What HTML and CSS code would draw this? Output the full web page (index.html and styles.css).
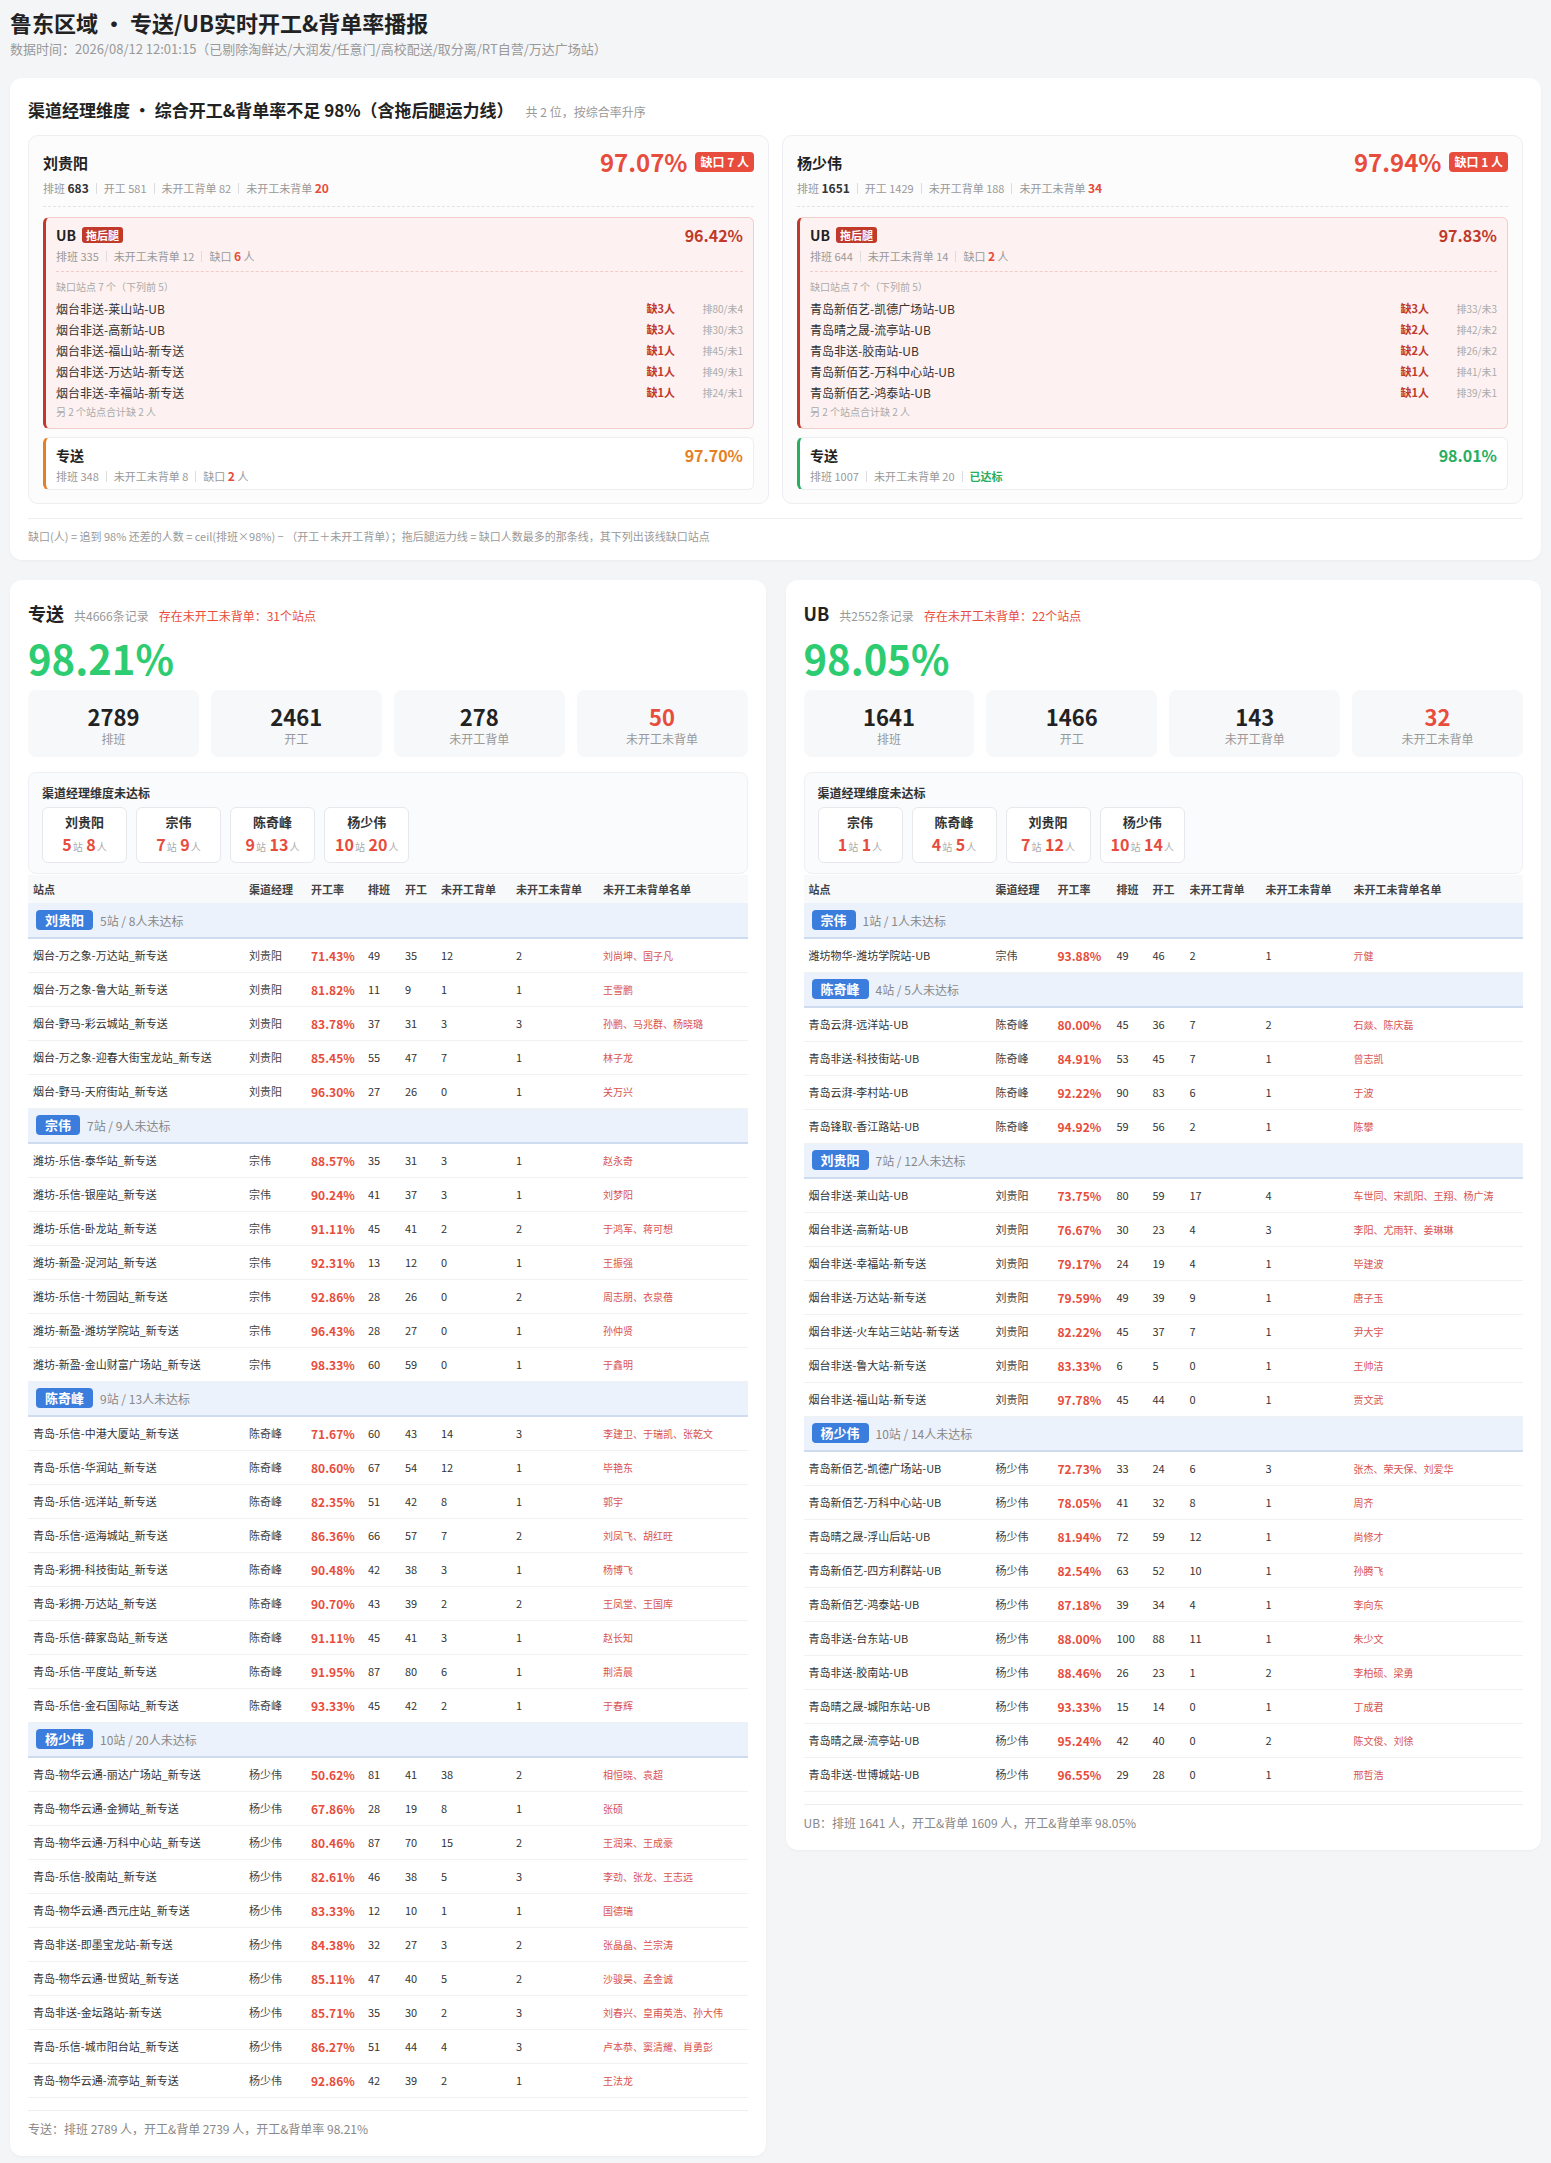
FILE: index.html
```html
<!DOCTYPE html>
<html lang="zh-CN">
<head>
<meta charset="utf-8">
<title>鲁东区域 · 专送/UB实时开工&amp;背单率播报</title>
<link rel="stylesheet" href="styles.css">
</head>
<body>
<h1 class="page-title">鲁东区域 · 专送/UB实时开工&amp;背单率播报</h1>
<div class="page-sub">数据时间：2026/08/12 12:01:15（已剔除淘鲜达/大润发/任意门/高校配送/取分离/RT自营/万达广场站）</div>

<section class="card top-card">
  <div class="sec-head">
    <span class="sec-title">渠道经理维度 · 综合开工&amp;背单率不足 98%（含拖后腿运力线）</span>
    <span class="sec-note">共 2 位，按综合率升序</span>
  </div>
  <div class="mgr-grid">
    <div class="mgr">
      <div class="mgr-head">
        <span class="mgr-name">刘贵阳</span>
        <span class="mgr-rate">97.07%</span>
        <span class="gap-badge">缺口 7 人</span>
      </div>
      <div class="mgr-stats">排班 <b class="b">683</b><i class="sep"></i>开工 581<i class="sep"></i>未开工背单 82<i class="sep"></i>未开工未背单 <b class="r">20</b></div>
      <div class="line ub">
        <div class="line-head"><span class="line-name">UB</span><span class="tag">拖后腿</span><span class="line-rate dred">96.42%</span></div>
        <div class="line-stats">排班 335<i class="sep"></i>未开工未背单 12<i class="sep"></i>缺口 <b class="r">6</b> 人</div>
        <div class="gap-title">缺口站点 7 个（下列前 5）</div>
        <div class="gap-list">
          <div class="gap-row"><span>烟台非送-莱山站-UB</span><span class="q">缺3人</span><span class="p">排80/未4</span></div>
          <div class="gap-row"><span>烟台非送-高新站-UB</span><span class="q">缺3人</span><span class="p">排30/未3</span></div>
          <div class="gap-row"><span>烟台非送-福山站-新专送</span><span class="q">缺1人</span><span class="p">排45/未1</span></div>
          <div class="gap-row"><span>烟台非送-万达站-新专送</span><span class="q">缺1人</span><span class="p">排49/未1</span></div>
          <div class="gap-row"><span>烟台非送-幸福站-新专送</span><span class="q">缺1人</span><span class="p">排24/未1</span></div>
        </div>
        <div class="gap-more">另 2 个站点合计缺 2 人</div>
      </div>
      <div class="line warn">
        <div class="line-head"><span class="line-name">专送</span><span class="line-rate orange">97.70%</span></div>
        <div class="line-stats">排班 348<i class="sep"></i>未开工未背单 8<i class="sep"></i>缺口 <b class="r">2</b> 人</div>
      </div>
    </div>

    <div class="mgr">
      <div class="mgr-head">
        <span class="mgr-name">杨少伟</span>
        <span class="mgr-rate">97.94%</span>
        <span class="gap-badge">缺口 1 人</span>
      </div>
      <div class="mgr-stats">排班 <b class="b">1651</b><i class="sep"></i>开工 1429<i class="sep"></i>未开工背单 188<i class="sep"></i>未开工未背单 <b class="r">34</b></div>
      <div class="line ub">
        <div class="line-head"><span class="line-name">UB</span><span class="tag">拖后腿</span><span class="line-rate dred">97.83%</span></div>
        <div class="line-stats">排班 644<i class="sep"></i>未开工未背单 14<i class="sep"></i>缺口 <b class="r">2</b> 人</div>
        <div class="gap-title">缺口站点 7 个（下列前 5）</div>
        <div class="gap-list">
          <div class="gap-row"><span>青岛新佰艺-凯德广场站-UB</span><span class="q">缺3人</span><span class="p">排33/未3</span></div>
          <div class="gap-row"><span>青岛晴之晟-流亭站-UB</span><span class="q">缺2人</span><span class="p">排42/未2</span></div>
          <div class="gap-row"><span>青岛非送-胶南站-UB</span><span class="q">缺2人</span><span class="p">排26/未2</span></div>
          <div class="gap-row"><span>青岛新佰艺-万科中心站-UB</span><span class="q">缺1人</span><span class="p">排41/未1</span></div>
          <div class="gap-row"><span>青岛新佰艺-鸿泰站-UB</span><span class="q">缺1人</span><span class="p">排39/未1</span></div>
        </div>
        <div class="gap-more">另 2 个站点合计缺 2 人</div>
      </div>
      <div class="line ok">
        <div class="line-head"><span class="line-name">专送</span><span class="line-rate dgreen">98.01%</span></div>
        <div class="line-stats">排班 1007<i class="sep"></i>未开工未背单 20<i class="sep"></i><b class="g">已达标</b></div>
      </div>
    </div>
  </div>
  <div class="foot">缺口(人) = 追到 98% 还差的人数 = ceil(排班×98%) − （开工＋未开工背单）；拖后腿运力线 = 缺口人数最多的那条线，其下列出该线缺口站点</div>
</section>

<div class="bottom-grid">
  <section class="card">
    <div class="panel-head"><span class="panel-title">专送</span><span class="cnt">共4666条记录</span><span class="warn-txt">存在未开工未背单：31个站点</span></div>
    <div class="big-rate">98.21%</div>
    <div class="stats">
      <div class="stat"><div class="n">2789</div><div class="l">排班</div></div>
      <div class="stat"><div class="n">2461</div><div class="l">开工</div></div>
      <div class="stat"><div class="n">278</div><div class="l">未开工背单</div></div>
      <div class="stat"><div class="n red">50</div><div class="l">未开工未背单</div></div>
    </div>
    <div class="mgr-panel">
      <div class="mp-title">渠道经理维度未达标</div>
      <div class="chips">
        <div class="chip"><div class="nm">刘贵阳</div><div class="nums"><b>5</b><small>站</small> <b>8</b><small>人</small></div></div>
        <div class="chip"><div class="nm">宗伟</div><div class="nums"><b>7</b><small>站</small> <b>9</b><small>人</small></div></div>
        <div class="chip"><div class="nm">陈奇峰</div><div class="nums"><b>9</b><small>站</small> <b>13</b><small>人</small></div></div>
        <div class="chip"><div class="nm">杨少伟</div><div class="nums"><b>10</b><small>站</small> <b>20</b><small>人</small></div></div>
      </div>
    </div>
    <table class="tbl zs">
      <colgroup><col class="c1"><col class="c2"><col class="c3"><col class="c4"><col class="c5"><col class="c6"><col class="c7"><col class="c8"></colgroup>
      <thead><tr><th>站点</th><th>渠道经理</th><th>开工率</th><th>排班</th><th>开工</th><th>未开工背单</th><th>未开工未背单</th><th>未开工未背单名单</th></tr></thead>
      <tbody>
        <tr class="grp"><td colspan="8"><span class="gbadge">刘贵阳</span><span class="gnote">5站 / 8人未达标</span></td></tr>
        <tr><td>烟台-万之象-万达站_新专送</td><td class="m">刘贵阳</td><td class="rate">71.43%</td><td>49</td><td>35</td><td>12</td><td>2</td><td class="names">刘尚坤、国子凡</td></tr>
        <tr><td>烟台-万之象-鲁大站_新专送</td><td class="m">刘贵阳</td><td class="rate">81.82%</td><td>11</td><td>9</td><td>1</td><td>1</td><td class="names">王雪鹏</td></tr>
        <tr><td>烟台-野马-彩云城站_新专送</td><td class="m">刘贵阳</td><td class="rate">83.78%</td><td>37</td><td>31</td><td>3</td><td>3</td><td class="names">孙鹏、马兆群、杨晓璐</td></tr>
        <tr><td>烟台-万之象-迎春大街宝龙站_新专送</td><td class="m">刘贵阳</td><td class="rate">85.45%</td><td>55</td><td>47</td><td>7</td><td>1</td><td class="names">林子龙</td></tr>
        <tr><td>烟台-野马-天府街站_新专送</td><td class="m">刘贵阳</td><td class="rate">96.30%</td><td>27</td><td>26</td><td>0</td><td>1</td><td class="names">关万兴</td></tr>
        <tr class="grp"><td colspan="8"><span class="gbadge">宗伟</span><span class="gnote">7站 / 9人未达标</span></td></tr>
        <tr><td>潍坊-乐信-泰华站_新专送</td><td class="m">宗伟</td><td class="rate">88.57%</td><td>35</td><td>31</td><td>3</td><td>1</td><td class="names">赵永奇</td></tr>
        <tr><td>潍坊-乐信-银座站_新专送</td><td class="m">宗伟</td><td class="rate">90.24%</td><td>41</td><td>37</td><td>3</td><td>1</td><td class="names">刘梦阳</td></tr>
        <tr><td>潍坊-乐信-卧龙站_新专送</td><td class="m">宗伟</td><td class="rate">91.11%</td><td>45</td><td>41</td><td>2</td><td>2</td><td class="names">于鸿军、蒋可想</td></tr>
        <tr><td>潍坊-新盈-浞河站_新专送</td><td class="m">宗伟</td><td class="rate">92.31%</td><td>13</td><td>12</td><td>0</td><td>1</td><td class="names">王振强</td></tr>
        <tr><td>潍坊-乐信-十笏园站_新专送</td><td class="m">宗伟</td><td class="rate">92.86%</td><td>28</td><td>26</td><td>0</td><td>2</td><td class="names">周志朋、衣泉蓓</td></tr>
        <tr><td>潍坊-新盈-潍坊学院站_新专送</td><td class="m">宗伟</td><td class="rate">96.43%</td><td>28</td><td>27</td><td>0</td><td>1</td><td class="names">孙仲贤</td></tr>
        <tr><td>潍坊-新盈-金山财富广场站_新专送</td><td class="m">宗伟</td><td class="rate">98.33%</td><td>60</td><td>59</td><td>0</td><td>1</td><td class="names">于鑫明</td></tr>
        <tr class="grp"><td colspan="8"><span class="gbadge">陈奇峰</span><span class="gnote">9站 / 13人未达标</span></td></tr>
        <tr><td>青岛-乐信-中港大厦站_新专送</td><td class="m">陈奇峰</td><td class="rate">71.67%</td><td>60</td><td>43</td><td>14</td><td>3</td><td class="names">李建卫、于瑞凯、张乾文</td></tr>
        <tr><td>青岛-乐信-华润站_新专送</td><td class="m">陈奇峰</td><td class="rate">80.60%</td><td>67</td><td>54</td><td>12</td><td>1</td><td class="names">毕艳东</td></tr>
        <tr><td>青岛-乐信-远洋站_新专送</td><td class="m">陈奇峰</td><td class="rate">82.35%</td><td>51</td><td>42</td><td>8</td><td>1</td><td class="names">郭宇</td></tr>
        <tr><td>青岛-乐信-运海城站_新专送</td><td class="m">陈奇峰</td><td class="rate">86.36%</td><td>66</td><td>57</td><td>7</td><td>2</td><td class="names">刘凤飞、胡红旺</td></tr>
        <tr><td>青岛-彩拥-科技街站_新专送</td><td class="m">陈奇峰</td><td class="rate">90.48%</td><td>42</td><td>38</td><td>3</td><td>1</td><td class="names">杨博飞</td></tr>
        <tr><td>青岛-彩拥-万达站_新专送</td><td class="m">陈奇峰</td><td class="rate">90.70%</td><td>43</td><td>39</td><td>2</td><td>2</td><td class="names">王凤堂、王国库</td></tr>
        <tr><td>青岛-乐信-薛家岛站_新专送</td><td class="m">陈奇峰</td><td class="rate">91.11%</td><td>45</td><td>41</td><td>3</td><td>1</td><td class="names">赵长知</td></tr>
        <tr><td>青岛-乐信-平度站_新专送</td><td class="m">陈奇峰</td><td class="rate">91.95%</td><td>87</td><td>80</td><td>6</td><td>1</td><td class="names">荆清晨</td></tr>
        <tr><td>青岛-乐信-金石国际站_新专送</td><td class="m">陈奇峰</td><td class="rate">93.33%</td><td>45</td><td>42</td><td>2</td><td>1</td><td class="names">于春辉</td></tr>
        <tr class="grp"><td colspan="8"><span class="gbadge">杨少伟</span><span class="gnote">10站 / 20人未达标</span></td></tr>
        <tr><td>青岛-物华云通-丽达广场站_新专送</td><td class="m">杨少伟</td><td class="rate">50.62%</td><td>81</td><td>41</td><td>38</td><td>2</td><td class="names">相恒晓、袁超</td></tr>
        <tr><td>青岛-物华云通-金狮站_新专送</td><td class="m">杨少伟</td><td class="rate">67.86%</td><td>28</td><td>19</td><td>8</td><td>1</td><td class="names">张硕</td></tr>
        <tr><td>青岛-物华云通-万科中心站_新专送</td><td class="m">杨少伟</td><td class="rate">80.46%</td><td>87</td><td>70</td><td>15</td><td>2</td><td class="names">王润来、王成豪</td></tr>
        <tr><td>青岛-乐信-胶南站_新专送</td><td class="m">杨少伟</td><td class="rate">82.61%</td><td>46</td><td>38</td><td>5</td><td>3</td><td class="names">李劲、张龙、王志远</td></tr>
        <tr><td>青岛-物华云通-西元庄站_新专送</td><td class="m">杨少伟</td><td class="rate">83.33%</td><td>12</td><td>10</td><td>1</td><td>1</td><td class="names">国德瑞</td></tr>
        <tr><td>青岛非送-即墨宝龙站-新专送</td><td class="m">杨少伟</td><td class="rate">84.38%</td><td>32</td><td>27</td><td>3</td><td>2</td><td class="names">张晶晶、兰宗涛</td></tr>
        <tr><td>青岛-物华云通-世贸站_新专送</td><td class="m">杨少伟</td><td class="rate">85.11%</td><td>47</td><td>40</td><td>5</td><td>2</td><td class="names">沙骏昊、孟金诚</td></tr>
        <tr><td>青岛非送-金坛路站-新专送</td><td class="m">杨少伟</td><td class="rate">85.71%</td><td>35</td><td>30</td><td>2</td><td>3</td><td class="names">刘春兴、皇甫英浩、孙大伟</td></tr>
        <tr><td>青岛-乐信-城市阳台站_新专送</td><td class="m">杨少伟</td><td class="rate">86.27%</td><td>51</td><td>44</td><td>4</td><td>3</td><td class="names">卢本恭、窦清耀、肖勇彭</td></tr>
        <tr><td>青岛-物华云通-流亭站_新专送</td><td class="m">杨少伟</td><td class="rate">92.86%</td><td>42</td><td>39</td><td>2</td><td>1</td><td class="names">王法龙</td></tr>
      </tbody>
    </table>
    <div class="panel-foot">专送：排班 2789 人，开工&amp;背单 2739 人，开工&amp;背单率 98.21%</div>
  </section>

  <section class="card">
    <div class="panel-head"><span class="panel-title">UB</span><span class="cnt">共2552条记录</span><span class="warn-txt">存在未开工未背单：22个站点</span></div>
    <div class="big-rate">98.05%</div>
    <div class="stats">
      <div class="stat"><div class="n">1641</div><div class="l">排班</div></div>
      <div class="stat"><div class="n">1466</div><div class="l">开工</div></div>
      <div class="stat"><div class="n">143</div><div class="l">未开工背单</div></div>
      <div class="stat"><div class="n red">32</div><div class="l">未开工未背单</div></div>
    </div>
    <div class="mgr-panel">
      <div class="mp-title">渠道经理维度未达标</div>
      <div class="chips">
        <div class="chip"><div class="nm">宗伟</div><div class="nums"><b>1</b><small>站</small> <b>1</b><small>人</small></div></div>
        <div class="chip"><div class="nm">陈奇峰</div><div class="nums"><b>4</b><small>站</small> <b>5</b><small>人</small></div></div>
        <div class="chip"><div class="nm">刘贵阳</div><div class="nums"><b>7</b><small>站</small> <b>12</b><small>人</small></div></div>
        <div class="chip"><div class="nm">杨少伟</div><div class="nums"><b>10</b><small>站</small> <b>14</b><small>人</small></div></div>
      </div>
    </div>
    <table class="tbl ub-t">
      <colgroup><col class="c1"><col class="c2"><col class="c3"><col class="c4"><col class="c5"><col class="c6"><col class="c7"><col class="c8"></colgroup>
      <thead><tr><th>站点</th><th>渠道经理</th><th>开工率</th><th>排班</th><th>开工</th><th>未开工背单</th><th>未开工未背单</th><th>未开工未背单名单</th></tr></thead>
      <tbody>
        <tr class="grp"><td colspan="8"><span class="gbadge">宗伟</span><span class="gnote">1站 / 1人未达标</span></td></tr>
        <tr><td>潍坊物华-潍坊学院站-UB</td><td class="m">宗伟</td><td class="rate">93.88%</td><td>49</td><td>46</td><td>2</td><td>1</td><td class="names">亓健</td></tr>
        <tr class="grp"><td colspan="8"><span class="gbadge">陈奇峰</span><span class="gnote">4站 / 5人未达标</span></td></tr>
        <tr><td>青岛云湃-远洋站-UB</td><td class="m">陈奇峰</td><td class="rate">80.00%</td><td>45</td><td>36</td><td>7</td><td>2</td><td class="names">石燚、陈庆磊</td></tr>
        <tr><td>青岛非送-科技街站-UB</td><td class="m">陈奇峰</td><td class="rate">84.91%</td><td>53</td><td>45</td><td>7</td><td>1</td><td class="names">曾志凯</td></tr>
        <tr><td>青岛云湃-李村站-UB</td><td class="m">陈奇峰</td><td class="rate">92.22%</td><td>90</td><td>83</td><td>6</td><td>1</td><td class="names">于波</td></tr>
        <tr><td>青岛锋取-香江路站-UB</td><td class="m">陈奇峰</td><td class="rate">94.92%</td><td>59</td><td>56</td><td>2</td><td>1</td><td class="names">陈攀</td></tr>
        <tr class="grp"><td colspan="8"><span class="gbadge">刘贵阳</span><span class="gnote">7站 / 12人未达标</span></td></tr>
        <tr><td>烟台非送-莱山站-UB</td><td class="m">刘贵阳</td><td class="rate">73.75%</td><td>80</td><td>59</td><td>17</td><td>4</td><td class="names">车世同、宋凯阳、王翔、杨广涛</td></tr>
        <tr><td>烟台非送-高新站-UB</td><td class="m">刘贵阳</td><td class="rate">76.67%</td><td>30</td><td>23</td><td>4</td><td>3</td><td class="names">李阳、尤雨轩、姜琳琳</td></tr>
        <tr><td>烟台非送-幸福站-新专送</td><td class="m">刘贵阳</td><td class="rate">79.17%</td><td>24</td><td>19</td><td>4</td><td>1</td><td class="names">毕建波</td></tr>
        <tr><td>烟台非送-万达站-新专送</td><td class="m">刘贵阳</td><td class="rate">79.59%</td><td>49</td><td>39</td><td>9</td><td>1</td><td class="names">唐子玉</td></tr>
        <tr><td>烟台非送-火车站三站站-新专送</td><td class="m">刘贵阳</td><td class="rate">82.22%</td><td>45</td><td>37</td><td>7</td><td>1</td><td class="names">尹大宇</td></tr>
        <tr><td>烟台非送-鲁大站-新专送</td><td class="m">刘贵阳</td><td class="rate">83.33%</td><td>6</td><td>5</td><td>0</td><td>1</td><td class="names">王帅洁</td></tr>
        <tr><td>烟台非送-福山站-新专送</td><td class="m">刘贵阳</td><td class="rate">97.78%</td><td>45</td><td>44</td><td>0</td><td>1</td><td class="names">贾文武</td></tr>
        <tr class="grp"><td colspan="8"><span class="gbadge">杨少伟</span><span class="gnote">10站 / 14人未达标</span></td></tr>
        <tr><td>青岛新佰艺-凯德广场站-UB</td><td class="m">杨少伟</td><td class="rate">72.73%</td><td>33</td><td>24</td><td>6</td><td>3</td><td class="names">张杰、荣天保、刘爱华</td></tr>
        <tr><td>青岛新佰艺-万科中心站-UB</td><td class="m">杨少伟</td><td class="rate">78.05%</td><td>41</td><td>32</td><td>8</td><td>1</td><td class="names">周齐</td></tr>
        <tr><td>青岛晴之晟-浮山后站-UB</td><td class="m">杨少伟</td><td class="rate">81.94%</td><td>72</td><td>59</td><td>12</td><td>1</td><td class="names">尚修才</td></tr>
        <tr><td>青岛新佰艺-四方利群站-UB</td><td class="m">杨少伟</td><td class="rate">82.54%</td><td>63</td><td>52</td><td>10</td><td>1</td><td class="names">孙腾飞</td></tr>
        <tr><td>青岛新佰艺-鸿泰站-UB</td><td class="m">杨少伟</td><td class="rate">87.18%</td><td>39</td><td>34</td><td>4</td><td>1</td><td class="names">李向东</td></tr>
        <tr><td>青岛非送-台东站-UB</td><td class="m">杨少伟</td><td class="rate">88.00%</td><td>100</td><td>88</td><td>11</td><td>1</td><td class="names">朱少文</td></tr>
        <tr><td>青岛非送-胶南站-UB</td><td class="m">杨少伟</td><td class="rate">88.46%</td><td>26</td><td>23</td><td>1</td><td>2</td><td class="names">李柏硕、梁勇</td></tr>
        <tr><td>青岛晴之晟-城阳东站-UB</td><td class="m">杨少伟</td><td class="rate">93.33%</td><td>15</td><td>14</td><td>0</td><td>1</td><td class="names">丁成君</td></tr>
        <tr><td>青岛晴之晟-流亭站-UB</td><td class="m">杨少伟</td><td class="rate">95.24%</td><td>42</td><td>40</td><td>0</td><td>2</td><td class="names">陈文俊、刘徐</td></tr>
        <tr><td>青岛非送-世博城站-UB</td><td class="m">杨少伟</td><td class="rate">96.55%</td><td>29</td><td>28</td><td>0</td><td>1</td><td class="names">邢哲浩</td></tr>
      </tbody>
    </table>
    <div class="panel-foot">UB：排班 1641 人，开工&amp;背单 1609 人，开工&amp;背单率 98.05%</div>
  </section>
</div>
</body>
</html>
```

FILE: styles.css
```css
* { box-sizing: border-box; }
html, body { margin: 0; }
body {
  background: #f4f5f7;
  font-family: "Noto Sans CJK SC", "Noto Sans", sans-serif;
  color: #222;
  padding: 8px 10px 8px;
}
b, i { font-style: normal; }

.page-title { font-size: 22px; font-weight: 700; line-height: 28px; margin: 0; color: #222; }
.page-sub { font-size: 13px; color: #999; line-height: 18px; margin-top: 4px; }

.card {
  background: #fff;
  border-radius: 12px;
  padding: 18px;
  box-shadow: 0 1px 3px rgba(0, 0, 0, 0.04);
}
.top-card { margin-top: 20px; padding-bottom: 16px; }

.sec-head { display: flex; align-items: baseline; gap: 12px; line-height: 28px; }
.sec-title { font-size: 17px; font-weight: 700; }
.sec-note { font-size: 12px; color: #999; }

.mgr-grid { display: grid; grid-template-columns: 1fr 1fr; gap: 13px; margin-top: 9px; }
.mgr {
  background: #fcfcfd;
  border: 1px solid #eceef1;
  border-radius: 10px;
  padding: 13px 14px 13px;
}
.mgr-head { display: flex; align-items: center; height: 26px; }
.mgr-name { font-size: 15px; font-weight: 700; color: #222; }
.mgr-rate { margin-left: auto; font-size: 24px; font-weight: 700; color: #e74c3c; line-height: 26px; }
.gap-badge {
  margin-left: 8px;
  background: #e74c3c;
  color: #fff;
  font-size: 12px;
  font-weight: 700;
  line-height: 20px;
  padding: 0 5px;
  border-radius: 4px;
}
.mgr-stats {
  margin-top: 5px;
  font-size: 11px;
  line-height: 16px;
  color: #999;
  padding-bottom: 10px;
  border-bottom: 1px dashed #e3e4e7;
  margin-bottom: 10px;
}
.sep {
  display: inline-block;
  width: 1px;
  height: 11px;
  background: #ddd;
  margin: 0 7px;
  vertical-align: -1px;
}
.b { color: #333; font-weight: 700; font-size: 12px; }
.r { color: #e74c3c; font-weight: 700; font-size: 12px; }
.g { color: #27ae60; font-weight: 700; font-size: 11px; }

.line {
  border: 1px solid #eceef1;
  border-left: 3px solid #ccc;
  border-radius: 6px;
  padding: 7px 10px 5px 10px;
  background: #fff;
}
.line + .line { margin-top: 8px; }
.line.ub { background: #fdf2f1; border-color: #f3cdc9; border-left-color: #c0392b; padding-bottom: 8px; }
.line.warn { border-left-color: #e67e22; }
.line.ok { border-left-color: #27ae60; }
.line-head { display: flex; align-items: center; line-height: 20px; }
.line-name { font-size: 14px; font-weight: 700; color: #222; }
.tag {
  background: #c0392b;
  color: #fff;
  font-size: 11px;
  font-weight: 700;
  line-height: 16px;
  padding: 0 4px;
  border-radius: 3px;
  margin-left: 6px;
}
.line-rate { margin-left: auto; font-size: 16px; font-weight: 700; }
.dred { color: #c0392b; }
.orange { color: #e67e22; }
.dgreen { color: #27ae60; }
.line-stats { margin-top: 3px; font-size: 11px; line-height: 16px; color: #999; }
.ub .line-stats { padding-bottom: 7px; border-bottom: 1px dashed #efcdc9; }
.gap-title { font-size: 10px; color: #aaa; line-height: 16px; margin-top: 7px; }
.gap-list { margin-top: 3px; }
.gap-row { display: grid; grid-template-columns: 1fr auto 68px; align-items: center; line-height: 21px; font-size: 12px; color: #333; }
.gap-row .q { color: #c0392b; font-weight: 700; font-size: 11px; }
.gap-row .p { color: #aaa; font-size: 10px; text-align: right; }
.gap-more { font-size: 10px; color: #aaa; line-height: 16px; margin-top: 1px; }

.foot {
  margin-top: 14px;
  border-top: 1px solid #eee;
  padding-top: 9px;
  font-size: 11px;
  color: #999;
  line-height: 16px;
}

.bottom-grid {
  display: grid;
  grid-template-columns: 1fr 1fr;
  gap: 20px;
  margin-top: 20px;
  align-items: start;
}
.panel-head { display: flex; align-items: baseline; line-height: 30px; }
.panel-title { font-size: 18px; font-weight: 700; color: #222; margin-right: 10px; }
.cnt { font-size: 12px; color: #999; margin-right: 10px; }
.warn-txt { font-size: 12px; color: #e74c3c; }
.big-rate { font-size: 40px; font-weight: 700; color: #2ecc71; line-height: 48px; margin-top: 3px; }

.stats { display: grid; grid-template-columns: repeat(4, 1fr); gap: 12px; margin-top: 8px; }
.stat { background: #f7f8fa; border-radius: 8px; text-align: center; padding: 12px 0 10px; }
.stat .n { font-size: 22px; font-weight: 700; line-height: 28px; color: #222; }
.stat .n.red { color: #e74c3c; }
.stat .l { font-size: 12px; color: #999; line-height: 17px; }

.mgr-panel {
  margin-top: 15px;
  background: #fafbfc;
  border: 1px solid #eef0f3;
  border-radius: 8px;
  padding: 11px 13px 10px;
}
.mp-title { font-size: 12px; font-weight: 700; color: #333; line-height: 17px; }
.chips { display: flex; gap: 9px; margin-top: 6px; }
.chip {
  min-width: 85px;
  background: #fff;
  border: 1px solid #e6e8eb;
  border-radius: 6px;
  text-align: center;
  padding: 5px 10px 3px;
}
.chip .nm { font-size: 13px; font-weight: 700; line-height: 18px; color: #333; }
.chip .nums { line-height: 24px; margin-top: 1px; color: #e74c3c; }
.chip .nums b { font-size: 16px; font-weight: 700; }
.chip .nums small { font-size: 10px; color: #aaa; margin-left: 1px; }

.tbl { width: 100%; border-collapse: collapse; table-layout: fixed; margin-top: 1px; }
.tbl th {
  background: #f8f9fb;
  font-size: 11px;
  font-weight: 700;
  color: #444;
  text-align: left;
  padding: 0 5px;
  height: 28px;
  white-space: nowrap;
}
.tbl td {
  font-size: 11px;
  color: #333;
  padding: 0 5px;
  height: 34px;
  border-bottom: 1px solid #f0f1f3;
  white-space: nowrap;
  overflow: hidden;
}
.tbl td.m { color: #444; }
.tbl td.rate { color: #e74c3c; font-weight: 700; font-size: 12px; }
.tbl td.names { color: #d9534f; font-size: 10px; }
.tbl tr.grp td {
  background: #ecf2fc;
  border-bottom: 2px solid #cfdcf0;
  height: 35px;
  padding: 0 8px;
}
.gbadge {
  display: inline-block;
  background: #3b7ddd;
  color: #fff;
  font-size: 13px;
  font-weight: 700;
  line-height: 20px;
  padding: 0 9px;
  border-radius: 4px;
  vertical-align: middle;
}
.gnote { font-size: 12px; color: #888; margin-left: 7px; vertical-align: middle; }

.zs .c1 { width: 216px; }
.zs .c2 { width: 62px; }
.zs .c3 { width: 57px; }
.zs .c4 { width: 37px; }
.zs .c5 { width: 36px; }
.zs .c6 { width: 75px; }
.zs .c7 { width: 87px; }
.zs .c8 { width: auto; }

.ub-t .c1 { width: 187px; }
.ub-t .c2 { width: 62px; }
.ub-t .c3 { width: 59px; }
.ub-t .c4 { width: 36px; }
.ub-t .c5 { width: 37px; }
.ub-t .c6 { width: 76px; }
.ub-t .c7 { width: 88px; }
.ub-t .c8 { width: auto; }

.panel-foot {
  margin-top: 12px;
  border-top: 1px solid #eee;
  padding-top: 9px;
  font-size: 12px;
  color: #888;
  line-height: 18px;
}
```
